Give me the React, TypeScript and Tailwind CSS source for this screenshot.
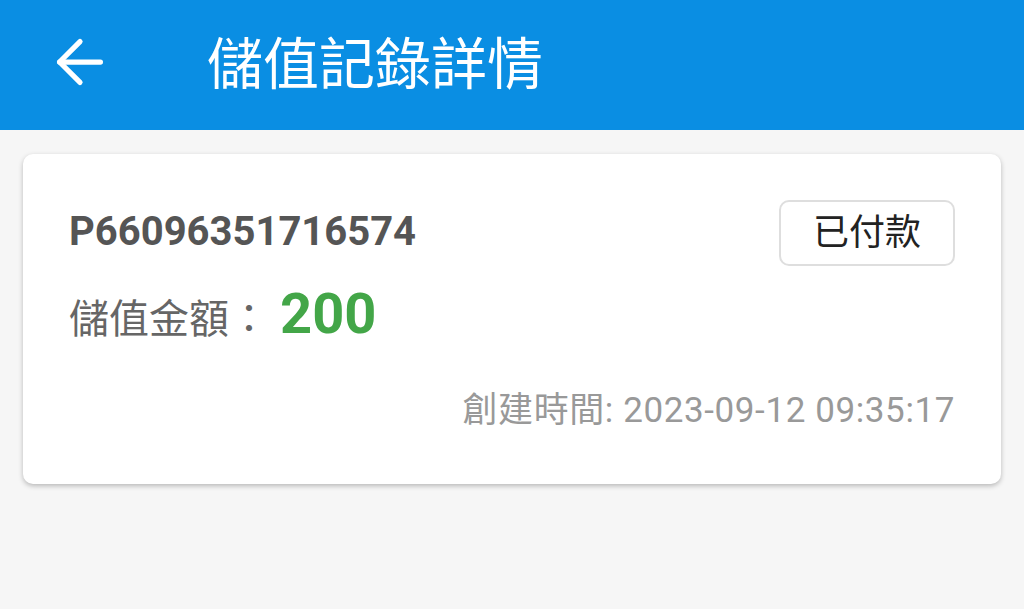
import { ArrowLeft } from "lucide-react";

const font = { fontFamily: 'Roboto, "Noto Sans CJK TC", sans-serif' };

export default function App() {
  return (
    <div className="w-[1024px] h-[609px] bg-[#f6f6f6] flex flex-col overflow-hidden" style={font}>
      <header className="h-[130px] bg-[#0a8ee3] flex items-center shrink-0">
        <div className="w-[207px] pl-[45px] flex items-center -mt-[6px]">
          <ArrowLeft className="w-[70px] h-[70px] text-white" strokeWidth={1.8} />
        </div>
        <h1 className="text-white text-[56px] leading-none">儲值記錄詳情</h1>
      </header>

      <main className="px-[23px] pt-[24px]">
        <div className="bg-white rounded-[10px] shadow-[0_2px_5px_rgba(0,0,0,0.25)] h-[330px] px-[46px] pt-[46px] flex flex-col">
          <div className="flex justify-between items-start">
            <div className="flex flex-col">
              <div className="text-[40px] font-bold text-[#555] leading-none mt-[12px]">P66096351716574</div>
              <div className="flex items-baseline mt-[34px]">
                <span className="text-[40px] text-[#666] leading-none">儲值金額：</span>
                <span className="ml-[11px] text-[56px] font-bold text-[#43a648] leading-none">200</span>
              </div>
            </div>
            <div className="w-[176px] h-[66px] border-2 border-[#dedede] rounded-[10px] flex items-center justify-center text-[36px] text-[#222]">
              已付款
            </div>
          </div>
          <div className="mt-auto mb-[56px] text-right text-[35px] tracking-[0.6px] text-[#999] leading-none">
            創建時間: 2023-09-12 09:35:17
          </div>
        </div>
      </main>
    </div>
  );
}
